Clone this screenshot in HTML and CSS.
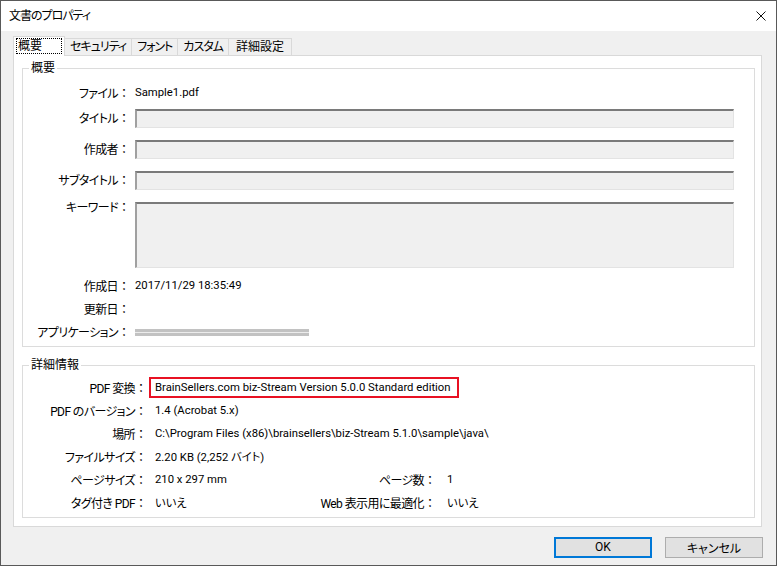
FILE: index.html
```html
<!DOCTYPE html>
<html lang="ja">
<head>
    <meta charset="UTF-8">
    <title>文書のプロパティ</title>
    <link rel="stylesheet" href="styles.css">
</head>
<body>
    <div class="window">
        <div class="titlebar">
            <span class="title">文書のプロパティ</span>
            <svg class="close" width="10" height="10" viewBox="0 0 10 10">
                <path d="M0.5 0.5 L9.5 9.5 M9.5 0.5 L0.5 9.5" stroke="#111" stroke-width="1" fill="none"/>
            </svg>
        </div>

        <div class="client">
            <div class="tabs">
                <div class="tab active"><span class="focus">概要</span></div>
                <div class="tab kana">セキュリティ</div>
                <div class="tab kana">フォント</div>
                <div class="tab kana">カスタム</div>
                <div class="tab">詳細設定</div>
            </div>

            <div class="panel">
                <fieldset class="group summary">
                    <legend>概要</legend>
                    <div class="row file-row">
                        <span class="label">ファイル<span class="colon">：</span></span>
                        <span class="value">Sample1.pdf</span>
                    </div>
                    <div class="row field-row">
                        <span class="label">タイトル<span class="colon">：</span></span>
                        <div class="input"></div>
                    </div>
                    <div class="row field-row">
                        <span class="label">作成者<span class="colon">：</span></span>
                        <div class="input"></div>
                    </div>
                    <div class="row field-row">
                        <span class="label">サブタイトル<span class="colon">：</span></span>
                        <div class="input"></div>
                    </div>
                    <div class="row area-row">
                        <span class="label">キーワード<span class="colon">：</span></span>
                        <div class="input area"></div>
                    </div>
                    <div class="row info-row created">
                        <span class="label">作成日<span class="colon">：</span></span>
                        <span class="value">2017/11/29 18:35:49</span>
                    </div>
                    <div class="row info-row">
                        <span class="label">更新日<span class="colon">：</span></span>
                        <span class="value"></span>
                    </div>
                    <div class="row info-row">
                        <span class="label">アプリケーション<span class="colon">：</span></span>
                        <span class="value"><span class="redacted"></span></span>
                    </div>
                </fieldset>

                <fieldset class="group details">
                    <legend>詳細情報</legend>
                    <div class="row">
                        <span class="label">PDF 変換<span class="colon">：</span></span>
                        <span class="value highlight">BrainSellers.com biz-Stream Version 5.0.0 Standard edition</span>
                    </div>
                    <div class="row">
                        <span class="label">PDF のバージョン<span class="colon">：</span></span>
                        <span class="value">1.4 (Acrobat 5.x)</span>
                    </div>
                    <div class="row">
                        <span class="label">場所<span class="colon">：</span></span>
                        <span class="value">C:\Program Files (x86)\brainsellers\biz-Stream 5.1.0\sample\java\</span>
                    </div>
                    <div class="row">
                        <span class="label">ファイルサイズ<span class="colon">：</span></span>
                        <span class="value">2.20 KB (2,252 バイト)</span>
                    </div>
                    <div class="row">
                        <span class="label">ページサイズ<span class="colon">：</span></span>
                        <span class="value half">210 x 297 mm</span>
                        <span class="label sub">ページ数<span class="colon">：</span></span>
                        <span class="value">1</span>
                    </div>
                    <div class="row">
                        <span class="label">タグ付き PDF<span class="colon">：</span></span>
                        <span class="value half">いいえ</span>
                        <span class="label sub">Web 表示用に最適化<span class="colon">：</span></span>
                        <span class="value">いいえ</span>
                    </div>
                </fieldset>
            </div>

            <div class="buttons">
                <button class="btn default">OK</button>
                <button class="btn">キャンセル</button>
            </div>
        </div>
    </div>
</body>
</html>
```

FILE: styles.css
```css
* {
    box-sizing: border-box;
}

body {
    margin: 0;
    background: #ffffff;
    font-family: Roboto, "Noto Sans CJK JP", sans-serif;
    font-size: 12px;
    color: #000000;
    font-feature-settings: "palt";
}

.window {
    width: 777px;
    height: 566px;
    border: 1px solid #595959;
    display: flex;
    flex-direction: column;
    background: #f0f0f0;
}

.titlebar {
    height: 30px;
    background: #ffffff;
    display: flex;
    align-items: center;
    justify-content: space-between;
    padding: 0 10px 1px 8px;
    flex-shrink: 0;
}

.title {
    line-height: 16px;
    letter-spacing: -1px;
}

.close {
    display: block;
    margin-top: 1px;
}

.client {
    flex: 1;
    padding: 5px 13px 0 12px;
    display: flex;
    flex-direction: column;
}

/* Tabs */
.tabs {
    display: flex;
    align-items: flex-end;
    height: 19px;
    padding-left: 1px;
    position: relative;
    z-index: 1;
}

.tab {
    height: 17px;
    line-height: 16px;
    padding: 0 7px;
    border: 1px solid #d9d9d9;
    border-bottom: none;
    margin-left: -1px;
    background: #f0f0f0;
}

.tab.kana {
    letter-spacing: -1px;
    padding: 0 5px;
}

.tab.active {
    height: 20px;
    margin-bottom: -1px;
    padding: 1px 2px 0;
    background: #ffffff;
}

.focus {
    display: block;
    border: 1px dotted #000000;
    padding: 0 1px;
    line-height: 14px;
    width: 46px;
}

/* Tab panel */
.panel {
    height: 472px;
    width: 749px;
    background: #ffffff;
    border: 1px solid #d9d9d9;
    padding: 4px 6px 0 8px;
}

.group {
    margin: 0;
    padding: 0;
    border: 1px solid #dcdcdc;
    min-width: 0;
}

.group legend {
    margin-left: 6px;
    padding: 0 2px;
    line-height: 16px;
}

.row {
    display: flex;
    align-items: center;
    padding-bottom: 3px;
}

.label {
    text-align: right;
    flex-shrink: 0;
    white-space: nowrap;
    letter-spacing: -0.6px;
}

.colon {
    font-feature-settings: normal;
    letter-spacing: 0;
}

.value {
    white-space: nowrap;
    font-size: 11.3px;
}

/* Summary group */
.summary {
    height: 287px;
}

.summary .label {
    width: 107px;
    margin-right: 5px;
}

.file-row {
    height: 19px;
    margin-top: 8px;
}

.field-row {
    height: 19px;
    margin-top: 6px;
    padding-bottom: 0;
}

.field-row .label {
    padding-bottom: 2px;
}

.field-row + .field-row,
.field-row + .area-row {
    margin-top: 12px;
}

.area-row {
    align-items: flex-start;
    padding-bottom: 0;
}

.area-row .label {
    line-height: 12px;
}

.input {
    width: 599px;
    height: 19px;
    background: #f0f0f0;
    border-top: 2px solid #7a7a7a;
    border-left: 2px solid #a0a0a0;
    border-right: 1px solid #e3e3e3;
    border-bottom: 1px solid #e3e3e3;
}

.input.area {
    height: 66px;
}

.info-row {
    height: 19px;
    margin-top: 4px;
}

.info-row.created {
    margin-top: 9px;
}

.redacted {
    display: inline-block;
    width: 174px;
    height: 7px;
    margin-top: 2px;
    background: linear-gradient(to bottom, #c2c2c2 0 3px, #ececec 3px 4px, #c2c2c2 4px);
    vertical-align: middle;
}

/* Details group */
.details {
    margin-top: 10px;
    height: 161px;
    padding-top: 3px;
}

.details .row {
    height: 23px;
    padding-bottom: 1px;
}

.details .label {
    width: 124px;
    margin-right: 2px;
}

.details .value {
    padding-left: 6px;
}

.details .value.half {
    width: 160px;
}

.details .label.sub {
    width: 127px;
    margin-right: 5px;
}

.highlight {
    border: 2px solid #e81123;
    height: 21px;
    line-height: 17px;
    padding: 0 6px 0 4px !important;
}

/* Buttons */
.buttons {
    display: flex;
    justify-content: flex-end;
    gap: 13px;
    padding-top: 10px;
}

.btn {
    width: 98px;
    height: 21px;
    font-family: inherit;
    font-size: 12px;
    font-feature-settings: "palt";
    background: #e1e1e1;
    border: 1px solid #adadad;
    padding: 0 0 1px;
    margin: 0;
    color: #000000;
}

.btn.default {
    border: 2px solid #0078d7;
}
```
